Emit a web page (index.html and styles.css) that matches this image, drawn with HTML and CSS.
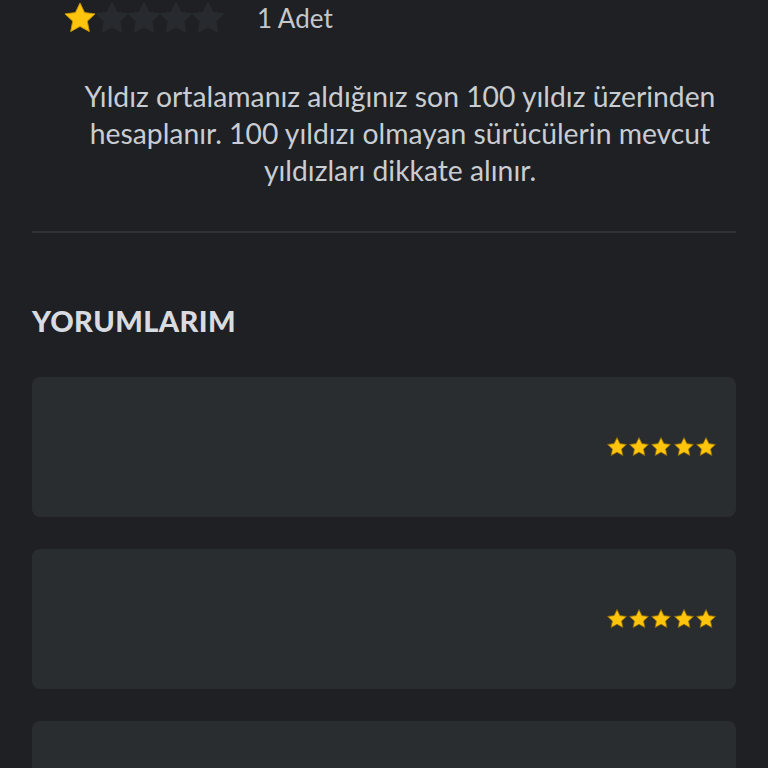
FILE: index.html
```html
<!DOCTYPE html>
<html>
<head>
<meta charset="utf-8">
<link rel="stylesheet" href="styles.css">
</head>
<body>
<div class="page">
  <div class="rating-row">
    <div class="stars-big">
      <svg class="star on" viewBox="0 0 24 24"><path d="M12 2.5l2.9 6.1 6.6.8-4.9 4.6 1.3 6.6L12 17.3l-5.9 3.3 1.3-6.6-4.9-4.6 6.6-.8z"/></svg>
      <svg class="star off" viewBox="0 0 24 24"><path d="M12 2.5l2.9 6.1 6.6.8-4.9 4.6 1.3 6.6L12 17.3l-5.9 3.3 1.3-6.6-4.9-4.6 6.6-.8z"/></svg>
      <svg class="star off" viewBox="0 0 24 24"><path d="M12 2.5l2.9 6.1 6.6.8-4.9 4.6 1.3 6.6L12 17.3l-5.9 3.3 1.3-6.6-4.9-4.6 6.6-.8z"/></svg>
      <svg class="star off" viewBox="0 0 24 24"><path d="M12 2.5l2.9 6.1 6.6.8-4.9 4.6 1.3 6.6L12 17.3l-5.9 3.3 1.3-6.6-4.9-4.6 6.6-.8z"/></svg>
      <svg class="star off" viewBox="0 0 24 24"><path d="M12 2.5l2.9 6.1 6.6.8-4.9 4.6 1.3 6.6L12 17.3l-5.9 3.3 1.3-6.6-4.9-4.6 6.6-.8z"/></svg>
    </div>
    <span class="count">1 Adet</span>
  </div>
  <p class="note">Yıldız ortalamanız aldığınız son 100 yıldız üzerinden hesaplanır. 100 yıldızı olmayan sürücülerin mevcut yıldızları dikkate alınır.</p>
  <hr class="divider">
  <h2 class="title">YORUMLARIM</h2>
  <div class="cards">
    <div class="card">
      <div class="stars-small">
        <svg viewBox="0 0 24 24"><path d="M12 2.5l2.9 6.1 6.6.8-4.9 4.6 1.3 6.6L12 17.3l-5.9 3.3 1.3-6.6-4.9-4.6 6.6-.8z"/></svg>
        <svg viewBox="0 0 24 24"><path d="M12 2.5l2.9 6.1 6.6.8-4.9 4.6 1.3 6.6L12 17.3l-5.9 3.3 1.3-6.6-4.9-4.6 6.6-.8z"/></svg>
        <svg viewBox="0 0 24 24"><path d="M12 2.5l2.9 6.1 6.6.8-4.9 4.6 1.3 6.6L12 17.3l-5.9 3.3 1.3-6.6-4.9-4.6 6.6-.8z"/></svg>
        <svg viewBox="0 0 24 24"><path d="M12 2.5l2.9 6.1 6.6.8-4.9 4.6 1.3 6.6L12 17.3l-5.9 3.3 1.3-6.6-4.9-4.6 6.6-.8z"/></svg>
        <svg viewBox="0 0 24 24"><path d="M12 2.5l2.9 6.1 6.6.8-4.9 4.6 1.3 6.6L12 17.3l-5.9 3.3 1.3-6.6-4.9-4.6 6.6-.8z"/></svg>
      </div>
    </div>
    <div class="card">
      <div class="stars-small">
        <svg viewBox="0 0 24 24"><path d="M12 2.5l2.9 6.1 6.6.8-4.9 4.6 1.3 6.6L12 17.3l-5.9 3.3 1.3-6.6-4.9-4.6 6.6-.8z"/></svg>
        <svg viewBox="0 0 24 24"><path d="M12 2.5l2.9 6.1 6.6.8-4.9 4.6 1.3 6.6L12 17.3l-5.9 3.3 1.3-6.6-4.9-4.6 6.6-.8z"/></svg>
        <svg viewBox="0 0 24 24"><path d="M12 2.5l2.9 6.1 6.6.8-4.9 4.6 1.3 6.6L12 17.3l-5.9 3.3 1.3-6.6-4.9-4.6 6.6-.8z"/></svg>
        <svg viewBox="0 0 24 24"><path d="M12 2.5l2.9 6.1 6.6.8-4.9 4.6 1.3 6.6L12 17.3l-5.9 3.3 1.3-6.6-4.9-4.6 6.6-.8z"/></svg>
        <svg viewBox="0 0 24 24"><path d="M12 2.5l2.9 6.1 6.6.8-4.9 4.6 1.3 6.6L12 17.3l-5.9 3.3 1.3-6.6-4.9-4.6 6.6-.8z"/></svg>
      </div>
    </div>
    <div class="card"></div>
  </div>
</div>
</body>
</html>
```
FILE: styles.css
```css
html, body {
  margin: 0;
  padding: 0;
  background: #1e2023;
  overflow: hidden;
  height: 768px;
}
.page {
  padding: 0 32px;
  font-family: "Lato", "Noto Sans", sans-serif;
  color: #c9cdd2;
}
.rating-row {
  display: flex;
  align-items: center;
  height: 36px;
  padding-left: 29px;
}
.stars-big {
  display: flex;
  width: 164px;
}
.star {
  width: 38px;
  height: 38px;
  margin-right: -6px;
}
.star.on path { fill: #ffc40c; stroke: #c99600; stroke-width: 0.6; stroke-linejoin: round; }
.star.off path { fill: #272a2e; stroke: #272a2e; stroke-width: 1.2; stroke-linejoin: round; }
.count {
  margin-left: 32px;
  font-size: 26px;
  color: #c4c8cd;
}
.note {
  margin: 42px 16px 0 48px;
  text-align: center;
  font-size: 28.3px;
  line-height: 37px;
  color: #c9cdd2;
}
.divider {
  border: 0;
  height: 2px;
  background: #2f3236;
  margin: 42px 0 0;
}
.title {
  margin: 71px 0 0;
  font-size: 29px;
  font-weight: 900;
  line-height: 34px;
  color: #d8dce1;
  letter-spacing: 0.4px;
}
.cards {
  margin-top: 39px;
  display: flex;
  flex-direction: column;
  gap: 32px;
}
.card {
  height: 140px;
  background: #2a2d30;
  border-radius: 8px;
  display: flex;
  align-items: center;
  justify-content: flex-end;
  padding-right: 20px;
  flex-shrink: 0;
}
.stars-small {
  display: flex;
}
.stars-small svg {
  width: 24px;
  height: 24px;
  margin-right: -1.8px;
}
.stars-small svg path {
  fill: #ffc40c;
  stroke: #8a6a00;
  stroke-width: 0.8;
  stroke-linejoin: round;
}
```
